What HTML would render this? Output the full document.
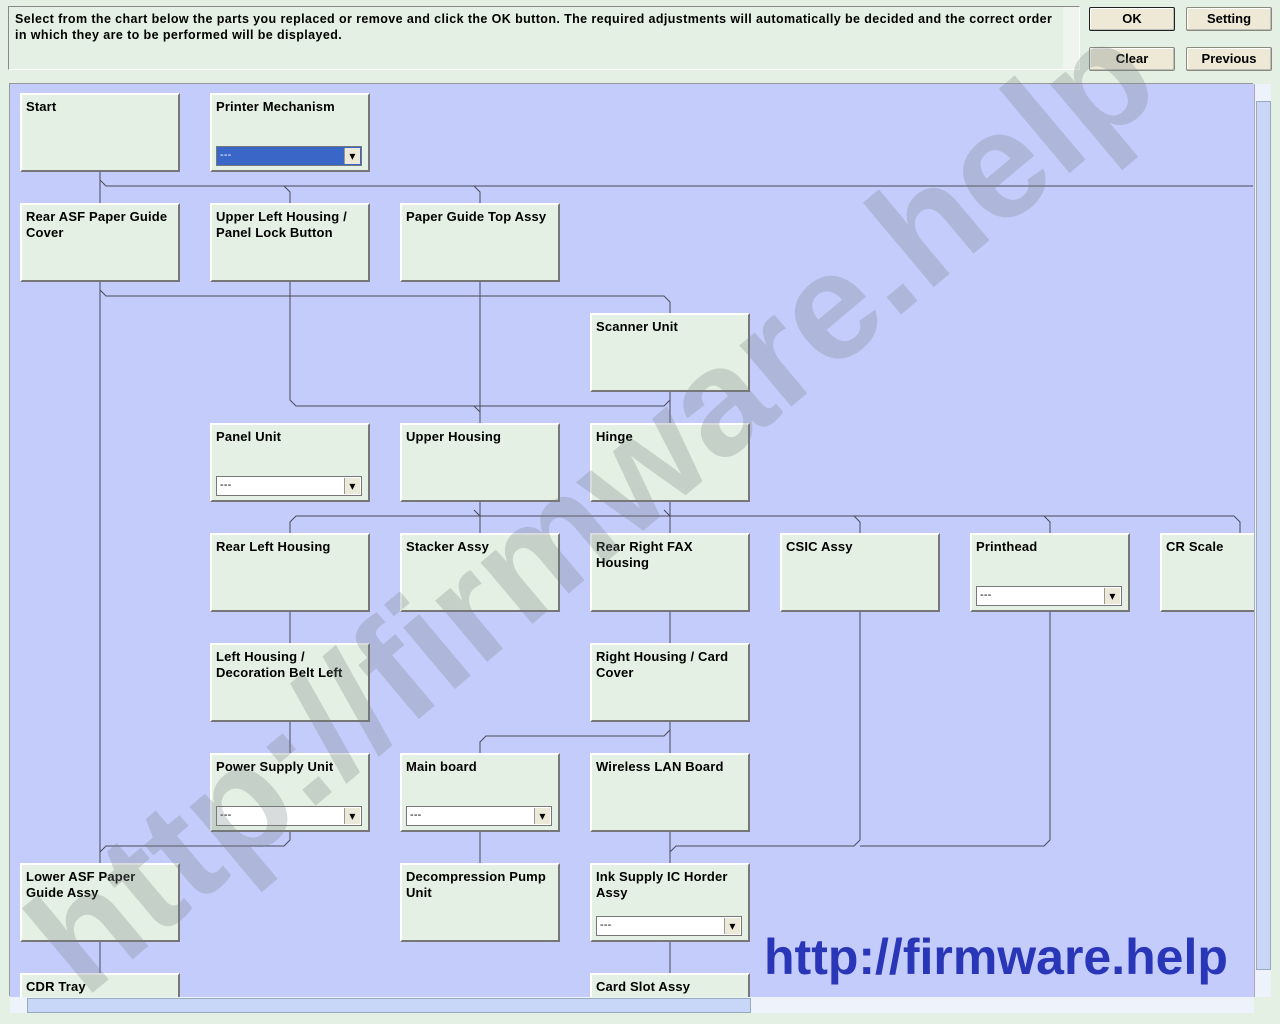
<!DOCTYPE html><html style="overflow:hidden;width:1280px;height:1024px"><head><style>
body{margin:0;width:1280px;height:1024px;background:#e3f0e3;font-family:"Liberation Sans",sans-serif;position:relative;overflow:hidden}
.t{position:absolute;left:8px;top:6px;width:1072px;height:64px;border:1px solid #888;border-right-color:#fff;border-bottom-color:#fff;background:#e3f0e3;font-size:12.5px;font-weight:bold;color:#000;box-sizing:border-box;padding:4px 20px 4px 6px;line-height:16px;letter-spacing:0.4px;white-space:nowrap}
.vs{position:absolute;right:0;top:0;width:16px;height:62px;background:#f0f4ef}
.btn{position:absolute;width:86px;height:24px;background:#ede9d6;border:1px solid #8a8a7a;box-sizing:border-box;text-align:center;font-size:13px;font-weight:bold;line-height:22px;border-radius:2px;box-shadow:inset -1px -1px #bbb,inset 1px 1px #fff}
.chart{position:absolute;left:10px;top:84px;width:1244px;height:913px;background:#c4ccfb;overflow:hidden;box-shadow:-1px -1px 0 #999}
.b{position:absolute;width:160px;height:79px;background:#e3f0e3;border-top:2px solid #fff;border-left:2px solid #fff;border-right:2px solid #777;border-bottom:2px solid #777;box-sizing:border-box;font-size:13px;font-weight:bold;padding:4px 6px 4px 4px;line-height:16px;letter-spacing:0.15px}
.d{position:absolute;left:4px;top:51px;width:146px;height:20px;background:#fff;border:1px solid #777;box-sizing:border-box;font-size:11px;font-weight:normal;line-height:17px;padding-left:3px}
.d.s{background:#3a66c8;color:#fff}
.d:after{content:"▾";position:absolute;right:1px;top:1px;width:15px;height:16px;background:#ece9d8;color:#000;font-size:12px;text-align:center;line-height:16px;border-left:1px solid #999}
.clip{position:absolute;left:0;top:0;width:1280px;height:1024px;overflow:hidden;pointer-events:none}
.wm{position:absolute;left:100px;top:866px;font-size:152px;line-height:152px;font-weight:bold;color:rgba(120,130,130,0.28);transform:rotate(-40deg);transform-origin:0 100%;white-space:nowrap}
</style></head><body>
<div class="t">Select from the chart below the parts you replaced or remove and click the OK button. The required adjustments will automatically be decided and the correct order<br>in which they are to be performed will be displayed.<div class="vs"></div></div>
<div class="btn" style="left:1089px;top:7px;border-color:#222">OK</div>
<div class="btn" style="left:1186px;top:7px">Setting</div>
<div class="btn" style="left:1089px;top:47px">Clear</div>
<div class="btn" style="left:1186px;top:47px">Previous</div>
<div class="chart">
<svg width="1244" height="913" style="position:absolute;left:-10px;top:-84px;overflow:visible" viewBox="0 0 1244 913">
<g fill="none" stroke="#4a4a5a" stroke-width="1">
<path d="M100 172V863M100 180l6 6H1253M284 186l6 6v11M474 186l6 6v11"/>
<path d="M100 290l6 6H664l6 6v11"/>
<path d="M290 282V400l6 6H664l6-6V392M670 392V423M480 282V423M474 406l6 6"/>
<path d="M670 502V533M664 510l6 6M296 516H1234l6 6v11M290 533v-11l6-6M480 502V533M474 510l6 6M854 516l6 6v11M1044 516l6 6v11"/>
<path d="M290 612V643M670 612V643M290 722V753M670 722V753M670 730l-6 6H486l-6 6v11"/>
<path d="M290 832v8l-6 6H106l-6 6"/>
<path d="M860 612V840l-6 6H676l-6 6M1050 612V840l-6 6H860M670 832V863M480 832V863M670 942V973M100 942V973"/>
</g></svg>
<div class="b" style="left:10px;top:9px">Start</div>
<div class="b" style="left:200px;top:9px">Printer Mechanism<div class="d s">---</div></div>
<div class="b" style="left:10px;top:119px">Rear ASF Paper Guide Cover</div>
<div class="b" style="left:200px;top:119px">Upper Left Housing / Panel Lock Button</div>
<div class="b" style="left:390px;top:119px">Paper Guide Top Assy</div>
<div class="b" style="left:580px;top:229px">Scanner Unit</div>
<div class="b" style="left:200px;top:339px">Panel Unit<div class="d">---</div></div>
<div class="b" style="left:390px;top:339px">Upper Housing</div>
<div class="b" style="left:580px;top:339px">Hinge</div>
<div class="b" style="left:200px;top:449px">Rear Left Housing</div>
<div class="b" style="left:390px;top:449px">Stacker Assy</div>
<div class="b" style="left:580px;top:449px">Rear Right FAX Housing</div>
<div class="b" style="left:770px;top:449px">CSIC Assy</div>
<div class="b" style="left:960px;top:449px">Printhead<div class="d">---</div></div>
<div class="b" style="left:1150px;top:449px">CR Scale</div>
<div class="b" style="left:200px;top:559px">Left Housing / Decoration Belt Left</div>
<div class="b" style="left:580px;top:559px">Right Housing / Card Cover</div>
<div class="b" style="left:200px;top:669px">Power Supply Unit<div class="d">---</div></div>
<div class="b" style="left:390px;top:669px">Main board<div class="d">---</div></div>
<div class="b" style="left:580px;top:669px">Wireless LAN Board</div>
<div class="b" style="left:10px;top:779px">Lower ASF Paper<br>Guide Assy</div>
<div class="b" style="left:390px;top:779px">Decompression Pump Unit</div>
<div class="b" style="left:580px;top:779px">Ink Supply IC Horder Assy<div class="d">---</div></div>
<div class="b" style="left:10px;top:889px">CDR Tray</div>
<div class="b" style="left:580px;top:889px">Card Slot Assy</div>
</div>
<div style="position:absolute;left:1254px;top:84px;width:16px;height:913px;background:#eef3fb;border-left:1px solid #aab"><div style="position:absolute;left:1px;top:17px;width:13px;height:867px;background:#c8d6f8;border:1px solid #9ab"></div></div>
<div style="position:absolute;left:10px;top:997px;width:1244px;height:16px;background:#eef3fb"><div style="position:absolute;left:17px;top:1px;width:722px;height:13px;background:#c8d6f8;border:1px solid #9ab"></div></div>
<div class="clip"><div class="wm">http://firmware.help</div></div>
<div style="position:absolute;left:764px;top:928px;font-size:50px;font-weight:bold;color:#2a36b8">http://firmware.help</div>
</body></html>
